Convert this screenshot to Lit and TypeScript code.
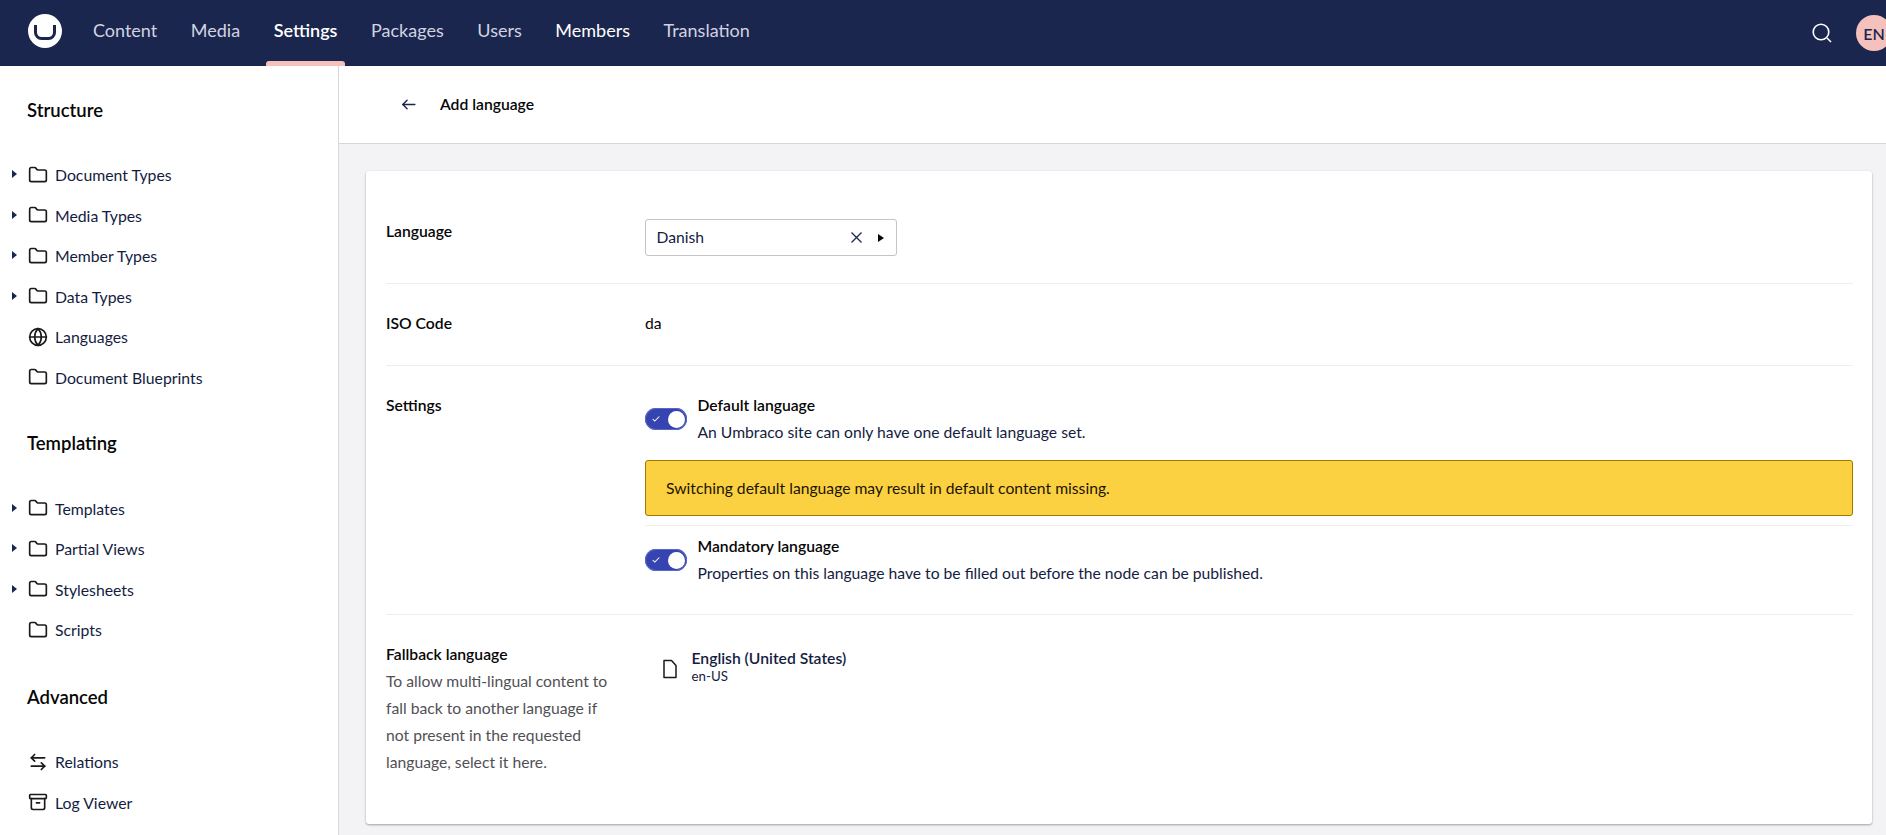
import { LitElement, html, css, svg } from "lit";
import { customElement } from "lit/decorators.js";

const folder = svg`<path d="M4 20h16a2 2 0 0 0 2-2V8a2 2 0 0 0-2-2h-7.93a2 2 0 0 1-1.66-.9l-.82-1.2A2 2 0 0 0 7.93 3H4a2 2 0 0 0-2 2v13c0 1.1.9 2 2 2Z"/>`;
const globe = svg`<circle cx="12" cy="12" r="10"/><path d="M12 2a14.5 14.5 0 0 0 0 20 14.5 14.5 0 0 0 0-20"/><path d="M2 12h20"/>`;
const swap = svg`<path d="M8 3 4 7l4 4"/><path d="M4 7h16"/><path d="m16 21 4-4-4-4"/><path d="M20 17H4"/>`;
const archive = svg`<rect x="2" y="3" width="20" height="5" rx="1"/><path d="M4 8v11a2 2 0 0 0 2 2h12a2 2 0 0 0 2-2V8"/><path d="M10 13h4"/>`;

type Item = { label: string; icon: unknown; caret?: boolean };
const groups: { title: string; items: Item[] }[] = [
  {
    title: "Structure",
    items: [
      { label: "Document Types", icon: folder, caret: true },
      { label: "Media Types", icon: folder, caret: true },
      { label: "Member Types", icon: folder, caret: true },
      { label: "Data Types", icon: folder, caret: true },
      { label: "Languages", icon: globe },
      { label: "Document Blueprints", icon: folder },
    ],
  },
  {
    title: "Templating",
    items: [
      { label: "Templates", icon: folder, caret: true },
      { label: "Partial Views", icon: folder, caret: true },
      { label: "Stylesheets", icon: folder, caret: true },
      { label: "Scripts", icon: folder },
    ],
  },
  {
    title: "Advanced",
    items: [
      { label: "Relations", icon: swap },
      { label: "Log Viewer", icon: archive },
    ],
  },
];

const nav = [
  { label: "Content" },
  { label: "Media" },
  { label: "Settings", active: true },
  { label: "Packages" },
  { label: "Users" },
  { label: "Members", bright: true },
  { label: "Translation" },
];

@customElement("app-root")
export class AppRoot extends LitElement {
  static styles = css`
    :host {
      display: flex;
      flex-direction: column;
      height: 835px;
      overflow: hidden;
      font-family: "Lato", "Liberation Sans", sans-serif;
      font-size: 15.7px;
      color: #060606;
      background: #f3f3f5;
    }
    .top {
      flex: none;
      height: 66px;
      background: #1b264f;
      display: flex;
      align-items: stretch;
      overflow: hidden;
    }
    .logo {
      flex: none;
      width: 34px;
      height: 34px;
      margin: 14px 14.2px 0 28px;
    }
    .tabs {
      display: flex;
    }
    .tab {
      position: relative;
      padding: 0 16.8px 6px;
      display: flex;
      align-items: center;
      font-size: 18px;
      color: #d1d4e0;
    }
    .tab.active,
    .tab.bright {
      color: #fff;
    }
    .tab.active {
      font-weight: 600;
    }
    .tab.active::after {
      content: "";
      position: absolute;
      left: 8.8px;
      right: 8.8px;
      bottom: 0;
      height: 5px;
      background: #f5c1bc;
      border-radius: 3px 3px 0 0;
    }
    .tools {
      margin-left: auto;
      display: flex;
      align-items: center;
      gap: 24px;
      margin-right: -6px;
    }
    .search {
      width: 20px;
      height: 20px;
      margin-top: -1px;
      color: #fff;
    }
    .avatar {
      width: 36px;
      height: 36px;
      border-radius: 50%;
      background: #f5c1bc;
      color: #1b264f;
      font-size: 16px;
      font-weight: 600;
      display: flex;
      align-items: center;
      justify-content: center;
    }
    .body {
      flex: 1;
      min-height: 0;
      display: flex;
    }
    .side {
      flex: none;
      width: 338px;
      background: #fff;
      border-right: 1px solid #d8d7d9;
      padding-top: 31.5px;
      overflow: hidden;
    }
    .group + .group {
      margin-top: 33.5px;
    }
    .group:last-child {
      margin-top: 34.5px;
    }
    .group h3 {
      margin: 0 0 33px 27px;
      font-size: 18.5px;
      font-weight: 600;
      line-height: 24px;
      color: #060606;
    }
    .item {
      position: relative;
      height: 40.5px;
      display: flex;
      align-items: center;
      padding-left: 27.5px;
      gap: 7.5px;
      font-size: 15.8px;
      color: #141c3f;
    }
    .item svg.ico {
      width: 20px;
      height: 20px;
      flex: none;
      color: #1a1a1a;
    }
    .item .caret {
      position: absolute;
      left: 12px;
      top: 50%;
      margin-top: -4.5px;
      width: 0;
      height: 0;
      border-left: 5px solid #1b264f;
      border-top: 4px solid transparent;
      border-bottom: 4px solid transparent;
    }
    .main {
      flex: 1;
      min-width: 0;
      display: flex;
      flex-direction: column;
    }
    .bar {
      flex: none;
      height: 76px;
      padding: 0 0 1px 61px;
      background: #fff;
      border-bottom: 1px solid #d8d7d9;
      display: flex;
      align-items: center;
      gap: 23px;
      font-weight: 600;
      font-size: 15.7px;
    }
    .bar svg {
      width: 17px;
      height: 17px;
      color: #1b264f;
    }
    .content {
      flex: 1;
      padding: 27px 14px 0 27px;
    }
    .card {
      background: #fff;
      border-radius: 3px;
      box-shadow: 0 1px 3px rgba(0, 0, 0, 0.12), 0 1px 2px rgba(0, 0, 0, 0.24);
      padding: 20px 19px 21px 20px;
    }
    .row {
      display: grid;
      grid-template-columns: 259px 1fr;
      padding: 27px 0;
      line-height: 27px;
    }
    .row + .row {
      border-top: 1px solid #eeeeef;
      padding-top: 26px;
    }
    .row.tall {
      padding-bottom: 28px;
    }
    .label {
      font-weight: 600;
    }
    .label p {
      margin: 0;
      width: 232px;
      font-weight: 400;
      color: #515054;
    }
    .select {
      width: 252px;
      height: 37px;
      box-sizing: border-box;
      margin-top: 1px;
      border: 1px solid #c4c4c4;
      border-radius: 3px;
      padding: 0 12.5px 0 10.5px;
      display: flex;
      align-items: center;
      color: #141c3f;
    }
    .select span {
      flex: 1;
    }
    .select svg {
      width: 13px;
      height: 13px;
      color: #1b264f;
    }
    .select i {
      margin-left: 14.5px;
      width: 0;
      height: 0;
      border-left: 6px solid #060606;
      border-top: 4px solid transparent;
      border-bottom: 4px solid transparent;
    }
    .toggle-row {
      display: flex;
      align-items: center;
      gap: 10.5px;
    }
    .toggle {
      flex: none;
      position: relative;
      width: 42px;
      height: 22px;
      border-radius: 11px;
      background: #3544b1;
      box-shadow: inset 0 0 0 1px #5a67c4;
    }
    .toggle svg {
      position: absolute;
      left: 6px;
      top: 6px;
      width: 10px;
      height: 10px;
      color: #fff;
    }
    .toggle::after {
      content: "";
      position: absolute;
      right: 2px;
      top: 2.5px;
      width: 17px;
      height: 17px;
      border-radius: 50%;
      background: #fff;
    }
    .toggle-text b {
      display: block;
      font-weight: 600;
    }
    .toggle-text span {
      display: block;
      color: #141c3f;
    }
    .alert {
      margin: 14px 0 9px;
      height: 56px;
      box-sizing: border-box;
      background: #fbd142;
      border: 1px solid #a17700;
      border-radius: 3px;
      padding: 0 20px;
      display: flex;
      align-items: center;
      color: #1b1400;
    }
    .sep {
      border-top: 1px solid #eeeeef;
      padding-top: 7px;
    }
    .ref {
      display: flex;
      align-items: center;
      padding: 8px 0 0 16.5px;
      gap: 14px;
      line-height: 18px;
    }
    .ref svg {
      width: 16px;
      height: 20px;
      margin-top: 4px;
      color: #1a1a1a;
      flex: none;
    }
    .ref b {
      display: block;
      font-weight: 600;
      color: #141c3f;
    }
    .ref small {
      display: block;
      font-size: 13.3px;
      color: #141c3f;
    }
  `;

  private check() {
    return html`<div class="toggle">
      <svg viewBox="0 0 24 24" fill="none" stroke="currentColor" stroke-width="2.5"><path d="M20 6 9 17l-5-5" /></svg>
    </div>`;
  }

  render() {
    return html`
      <header class="top">
        <svg class="logo" viewBox="0 0 34 34">
          <circle cx="17" cy="17" r="17" fill="#fff" />
          <path d="M7.5 11 v7.5 a6 6 0 0 0 6 6 h7 a6 6 0 0 0 6 -6 v-7.5" fill="none" stroke="#1b264f" stroke-width="3" />
        </svg>
        <nav class="tabs">
          ${nav.map(
            (n) => html`<div class="tab ${n.active ? "active" : ""} ${n.bright ? "bright" : ""}">${n.label}</div>`
          )}
        </nav>
        <div class="tools">
          <svg class="search" viewBox="0 0 20 20" fill="none" stroke="currentColor" stroke-width="1.6">
            <circle cx="9" cy="9" r="7.8" /><path d="M15 15l4 4" />
          </svg>
          <div class="avatar">EN</div>
        </div>
      </header>
      <div class="body">
        <aside class="side">
          ${groups.map(
            (g) => html`<section class="group">
              <h3>${g.title}</h3>
              ${g.items.map(
                (i) => html`<div class="item">
                  ${i.caret ? html`<span class="caret"></span>` : ""}
                  <svg class="ico" viewBox="0 0 24 24" fill="none" stroke="currentColor" stroke-width="2" stroke-linecap="round" stroke-linejoin="round">${i.icon}</svg>
                  <span>${i.label}</span>
                </div>`
              )}
            </section>`
          )}
        </aside>
        <main class="main">
          <div class="bar">
            <svg viewBox="0 0 24 24" fill="none" stroke="currentColor" stroke-width="2" stroke-linecap="round" stroke-linejoin="round"><path d="m10 18-6-6 6-6" /><path d="M4 12h17" /></svg>
            <span>Add language</span>
          </div>
          <div class="content">
            <div class="card">
              <div class="row">
                <div class="label">Language</div>
                <div>
                  <div class="select">
                    <span>Danish</span>
                    <svg viewBox="0 0 13 13" fill="none" stroke="currentColor" stroke-width="1.3"><path d="M1.5 1.5l10 10M11.5 1.5l-10 10" /></svg>
                    <i></i>
                  </div>
                </div>
              </div>
              <div class="row tall">
                <div class="label">ISO Code</div>
                <div>da</div>
              </div>
              <div class="row">
                <div class="label">Settings</div>
                <div>
                  <div class="toggle-row">
                    ${this.check()}
                    <div class="toggle-text">
                      <b>Default language</b>
                      <span>An Umbraco site can only have one default language set.</span>
                    </div>
                  </div>
                  <div class="alert">Switching default language may result in default content missing.</div>
                  <div class="sep">
                    <div class="toggle-row">
                      ${this.check()}
                      <div class="toggle-text">
                        <b>Mandatory language</b>
                        <span>Properties on this language have to be filled out before the node can be published.</span>
                      </div>
                    </div>
                  </div>
                </div>
              </div>
              <div class="row">
                <div class="label">
                  Fallback language
                  <p>To allow multi-lingual content to fall back to another language if not present in the requested language, select it here.</p>
                </div>
                <div>
                  <div class="ref">
                    <svg viewBox="0 0 16 20" fill="none" stroke="currentColor" stroke-width="1.5" stroke-linejoin="round"><path d="M2 1.5h7.5l4.5 5v12H2z" /></svg>
                    <div>
                      <b>English (United States)</b>
                      <small>en-US</small>
                    </div>
                  </div>
                </div>
              </div>
            </div>
          </div>
        </main>
      </div>
    `;
  }
}
